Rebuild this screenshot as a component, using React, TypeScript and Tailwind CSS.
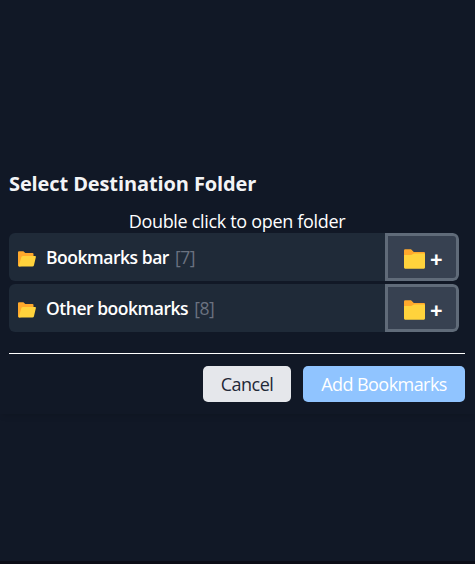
type Folder = { name: string; count: number };

const folders: Folder[] = [
  { name: "Bookmarks bar", count: 7 },
  { name: "Other bookmarks", count: 8 },
];

function OpenFolderIcon() {
  return (
    <svg className="mt-[3px] h-4 w-[18px] shrink-0" viewBox="0 0 18 16">
      <path d="M0 1.3Q0 .3 1 .3H5.4L7.3 2H14.5Q15.5 2 15.5 3V13L1 15.5Q0 15.5 0 14.5Z" fill="#ffa92c" />
      <path d="M.9 14.6L3.3 6.2Q3.7 4.9 5 4.9H17Q18.2 4.9 17.9 6.1L15.9 14.5Q15.6 15.6 14.4 15.6H1.6Q.7 15.6 .9 14.6Z" fill="#ffd33c" />
    </svg>
  );
}

function ClosedFolderIcon() {
  return (
    <svg className="mt-1 h-5 w-[21px] shrink-0" viewBox="0 0 21 20">
      <path d="M0 1.4Q0 .3 1.1 .3H7L9.8 3H20Q21 3 21 4V9H0Z" fill="#ffa92c" />
      <path d="M0 6H7.2L10 4.5H20Q21 4.5 21 5.5V18.6Q21 19.7 19.9 19.7H1.1Q0 19.7 0 18.6Z" fill="#ffd33c" />
    </svg>
  );
}

function FolderRow({ name, count }: Folder) {
  return (
    <li className="flex h-12 overflow-hidden rounded-md bg-[#1f2a38]">
      <div className="flex flex-1 items-center pl-[9px]">
        <OpenFolderIcon />
        <span className="ml-[10px] whitespace-nowrap text-[17.5px] leading-7 font-semibold tracking-[-0.47px] text-white">{name}</span>
        <span className="ml-[6px] text-[17.5px] leading-7 tracking-[-0.5px] text-[#6b7280]">[{count}]</span>
      </div>
      <button className="flex w-[74px] items-center rounded-r-md border-[3px] border-[#606b79] bg-[#374151] pl-4 text-white">
        <ClosedFolderIcon />
        <span className="ml-[5px] pt-0.5 text-[22px] leading-6 font-bold">+</span>
      </button>
    </li>
  );
}

export default function App() {
  return (
    <div className="h-[564px] w-[475px] border-b-[3px] border-[#0b0d17] bg-[#111826] pt-[168px] font-['Open_Sans','Noto_Sans',sans-serif]">
      <section className="h-[246px] pr-[10px] pl-[9px] shadow-[0_4px_6px_-2px_rgba(0,0,0,0.12)]">
        <h1 className="whitespace-nowrap text-[20px] leading-8 font-bold tracking-[-0.11px] text-[#f3f4f6]">Select Destination Folder</h1>
        <p className="mt-[8px] h-[25px] whitespace-nowrap text-center text-[18px] leading-[27px] tracking-[-0.32px] text-white">Double click to open folder</p>
        <ul className="mr-[6px] flex flex-col gap-[3px]">
          {folders.map((folder) => (
            <FolderRow key={folder.name} {...folder} />
          ))}
        </ul>
        <footer className="mt-[21px] flex justify-end gap-3 border-t border-white pt-3">
          <button className="h-9 w-[88px] rounded-[5px] bg-[#e5e7eb] text-[18px] leading-9 tracking-[-0.5px] text-[#1f2937]">Cancel</button>
          <button className="h-9 w-[162px] rounded-[5px] bg-[#90c4ff] text-[18px] leading-9 tracking-[-0.55px] text-white">Add Bookmarks</button>
        </footer>
      </section>
    </div>
  );
}
